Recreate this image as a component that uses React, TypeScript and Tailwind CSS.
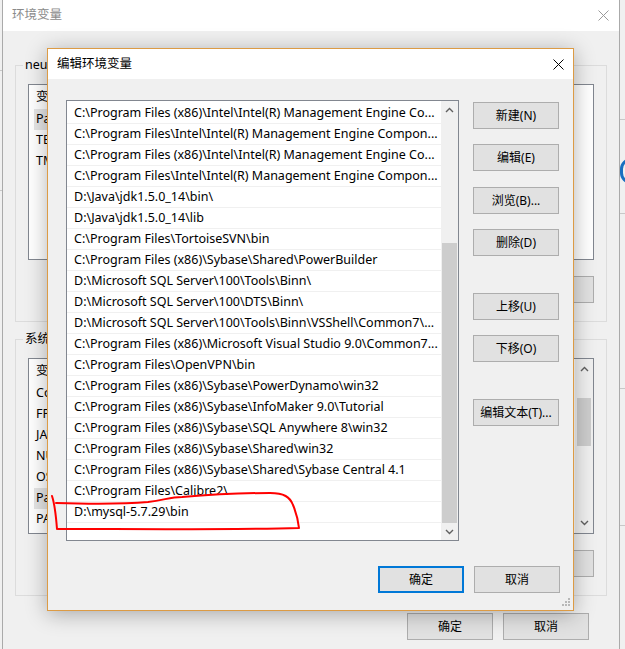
import React from "react";

const FONT = "font-['Noto_Sans','Noto_Sans_CJK_SC',sans-serif]";

const pathRows = [
  "C:\\Program Files (x86)\\Intel\\Intel(R) Management Engine Co...",
  "C:\\Program Files\\Intel\\Intel(R) Management Engine Compon...",
  "C:\\Program Files (x86)\\Intel\\Intel(R) Management Engine Co...",
  "C:\\Program Files\\Intel\\Intel(R) Management Engine Compon...",
  "D:\\Java\\jdk1.5.0_14\\bin\\",
  "D:\\Java\\jdk1.5.0_14\\lib",
  "C:\\Program Files\\TortoiseSVN\\bin",
  "C:\\Program Files (x86)\\Sybase\\Shared\\PowerBuilder",
  "D:\\Microsoft SQL Server\\100\\Tools\\Binn\\",
  "D:\\Microsoft SQL Server\\100\\DTS\\Binn\\",
  "D:\\Microsoft SQL Server\\100\\Tools\\Binn\\VSShell\\Common7\\...",
  "C:\\Program Files (x86)\\Microsoft Visual Studio 9.0\\Common7...",
  "C:\\Program Files\\OpenVPN\\bin",
  "C:\\Program Files (x86)\\Sybase\\PowerDynamo\\win32",
  "C:\\Program Files (x86)\\Sybase\\InfoMaker 9.0\\Tutorial",
  "C:\\Program Files (x86)\\Sybase\\SQL Anywhere 8\\win32",
  "C:\\Program Files (x86)\\Sybase\\Shared\\win32",
  "C:\\Program Files (x86)\\Sybase\\Shared\\Sybase Central 4.1",
  "C:\\Program Files\\Calibre2\\",
  "D:\\mysql-5.7.29\\bin",
];

function Chevron({ down = false }: { down?: boolean }) {
  return (
    <svg width="9" height="6" viewBox="0 0 9 6">
      <path
        d={down ? "M1 1 L4.5 4.5 L8 1" : "M1 5 L4.5 1.5 L8 5"}
        stroke="#606060"
        strokeWidth="1.4"
        fill="none"
      />
    </svg>
  );
}

function CloseX({ color }: { color: string }) {
  return (
    <svg width="11" height="11" viewBox="0 0 11 11">
      <path d="M0.5 0.5 L10.5 10.5 M10.5 0.5 L0.5 10.5" stroke={color} strokeWidth="1" />
    </svg>
  );
}

function Grip() {
  return (
    <svg width="9" height="9" viewBox="0 0 9 9">
      {[
        [7, 0],
        [4, 3],
        [7, 3],
        [1, 6],
        [4, 6],
        [7, 6],
      ].map(([x, y], i) => (
        <rect key={i} x={x} y={y} width="2" height="2" fill="#b8b8b8" />
      ))}
    </svg>
  );
}

function Btn({ children, primary = false }: { children: React.ReactNode; primary?: boolean }) {
  return (
    <div
      className={`w-[86px] h-[27px] shrink-0 flex items-center justify-center text-[12px] text-black bg-[#e1e1e1] ${
        primary ? "border-2 border-[#0078d7]" : "border border-[#adadad]"
      }`}
    >
      {children}
    </div>
  );
}

function BgList({ rows, scroll }: { rows: { k: string; sel?: boolean }[]; scroll?: boolean }) {
  return (
    <div className="h-[176px] border border-[#828790] bg-white flex">
      <div className="flex-1 flex flex-col">
        <div className="h-[24px] flex items-center pl-[7px] text-[12.5px] text-black">
          <span className="w-[160px]">变量</span>
          <span>值</span>
        </div>
        {rows.map((r, i) => (
          <div key={i} className="h-[21px] flex items-stretch pl-[5px] text-[12.5px] text-black">
            <span className={`w-[150px] pl-[2px] flex items-center ${r.sel ? "bg-[#e5e5e5]" : ""}`}>{r.k}</span>
          </div>
        ))}
      </div>
      {scroll && (
        <div className="w-[18px] bg-[#f0f0f0] flex flex-col">
          <div className="h-[20px] flex items-center justify-center">
            <Chevron />
          </div>
          <div className="flex-1 flex flex-col px-[2px]">
            <div className="h-[19px]" />
            <div className="h-[48px] bg-[#cdcdcd]" />
          </div>
          <div className="h-[20px] flex items-center justify-center">
            <Chevron down />
          </div>
        </div>
      )}
    </div>
  );
}

function GroupBox({ label, children }: { label: string; children: React.ReactNode }) {
  return (
    <div className="relative border border-[#dcdcdc] px-[12px] pt-[18px] pb-[18px]">
      <span className="absolute left-[7px] -top-[10px] px-[2px] bg-[#f0f0f0] text-[12.5px] text-black">{label}</span>
      {children}
    </div>
  );
}

export default function App() {
  return (
    <div className={`relative w-[625px] h-[649px] overflow-hidden bg-[#f0f0f0] ${FONT}`}>
      {/* fragments of the desktop behind */}
      <div className="absolute left-[619px] top-[119px] w-[6px] h-px bg-[#c8c8c8]" />
      <div className="absolute left-[619px] top-[213px] w-[6px] h-px bg-[#c8c8c8]" />
      <div className="absolute left-[619px] top-[388px] w-[6px] h-px bg-[#c8c8c8]" />
      <div className="absolute left-[619px] top-[525px] w-[6px] h-px bg-[#c8c8c8]" />
      <div className="absolute left-[620px] top-[158px] w-[22px] h-[26px] rounded-full border-[3px] border-[#1a6fc0]" />
      <div className="absolute left-0 top-[70px] w-[3px] h-px bg-[#c8c8c8]" />
      <div className="absolute left-0 top-[190px] w-[3px] h-px bg-[#c8c8c8]" />

      {/* background window: 环境变量 */}
      <div className="absolute left-[2px] top-0 w-[618px] h-[680px] border-x border-[#aaaaaa] bg-[#f0f0f0] flex flex-col">
        <div className="h-[31px] bg-white flex items-center justify-between pl-[9px] pr-[10px]">
          <span className="text-[12.5px] text-[#8a8a8a]">环境变量</span>
          <CloseX color="#9a9a9a" />
        </div>
        <div className="px-[12px] pt-[34px] flex flex-col">
          <GroupBox label="neusoft 的用户变量(U)">
            <BgList rows={[{ k: "Path", sel: true }, { k: "TEMP" }, { k: "TMP" }]} />
            <div className="mt-[16px] flex justify-end gap-[10px]">
              <Btn>新建(N)...</Btn>
              <Btn>编辑(E)...</Btn>
              <Btn>删除(D)</Btn>
            </div>
          </GroupBox>
          <div className="h-[17px]" />
          <GroupBox label="系统变量(S)">
            <BgList
              scroll
              rows={[
                { k: "ComSpec" },
                { k: "FP_NO_HOST_CHECK" },
                { k: "JAVA_HOME" },
                { k: "NUMBER_OF_PROCESSORS" },
                { k: "OS" },
                { k: "Path", sel: true },
                { k: "PATHEXT" },
              ]}
            />
            <div className="mt-[16px] flex justify-end gap-[10px]">
              <Btn>新建(W)...</Btn>
              <Btn>编辑(I)...</Btn>
              <Btn>删除(L)</Btn>
            </div>
          </GroupBox>
          <div className="mt-[17px] flex justify-end gap-[10px] pr-[18px]">
            <Btn>确定</Btn>
            <Btn>取消</Btn>
          </div>
        </div>
      </div>

      {/* foreground dialog: 编辑环境变量 */}
      <div className="absolute left-[47px] top-[48px] w-[527px] h-[563px] border border-[#dc9b45] bg-[#f0f0f0] shadow-[0_3px_20px_rgba(0,0,0,0.3)] flex flex-col">
        <div className="h-[30px] bg-white flex items-center justify-between pl-[9px] pr-[9px]">
          <span className="text-[12.5px] text-black">编辑环境变量</span>
          <CloseX color="#000000" />
        </div>
        <div className="pl-[18px] pr-[13px] pt-[21px] flex">
          <div className="w-[393px] h-[441px] border border-[#828790] bg-white flex">
            <div className="flex-1 pt-[2px] overflow-hidden">
              {pathRows.map((r, i) => (
                <div
                  key={i}
                  className="h-[21px] border-b border-[#f0f0f0] pl-[7px] flex items-center whitespace-nowrap overflow-hidden text-[12.5px] text-black"
                >
                  {r}
                </div>
              ))}
            </div>
            <div className="w-[17px] bg-[#f0f0f0] flex flex-col">
              <div className="h-[17px] flex items-center justify-center">
                <Chevron />
              </div>
              <div className="flex-1 flex flex-col justify-end px-px">
                <div className="h-[280px] bg-[#cdcdcd]" />
              </div>
              <div className="h-[17px] flex items-center justify-center">
                <Chevron down />
              </div>
            </div>
          </div>
          <div className="ml-[14px] pt-[2px] flex flex-col">
            <Btn>新建(N)</Btn>
            <div className="h-[15px]" />
            <Btn>编辑(E)</Btn>
            <div className="h-[16px]" />
            <Btn>浏览(B)...</Btn>
            <div className="h-[15px]" />
            <Btn>删除(D)</Btn>
            <div className="h-[37px]" />
            <Btn>上移(U)</Btn>
            <div className="h-[15px]" />
            <Btn>下移(O)</Btn>
            <div className="h-[37px]" />
            <Btn>编辑文本(T)...</Btn>
          </div>
        </div>
        <div className="mt-[25px] pr-[13px] flex justify-end gap-[10px]">
          <Btn primary>确定</Btn>
          <Btn>取消</Btn>
        </div>
        <div className="flex-1 flex items-end justify-end pr-[3px] pb-[3px]">
          <Grip />
        </div>
      </div>

      {/* red hand-drawn annotation */}
      <svg className="absolute left-0 top-0 pointer-events-none" width="625" height="649" viewBox="0 0 625 649">
        <path d="M52 496 C55 505 56 516 57 529" stroke="#ff0000" strokeWidth="2" fill="none" strokeLinecap="round" />
        <path
          d="M56 503 C90 504 125 504 148 502 C165 500 170 497 182 497 C205 495 240 493 270 493 C284 493 290 497 293 505 C296 512 298 520 299 528 C230 530 130 529 58 529"
          stroke="#ff0000"
          strokeWidth="2"
          fill="none"
          strokeLinecap="round"
          strokeLinejoin="round"
        />
      </svg>
    </div>
  );
}
